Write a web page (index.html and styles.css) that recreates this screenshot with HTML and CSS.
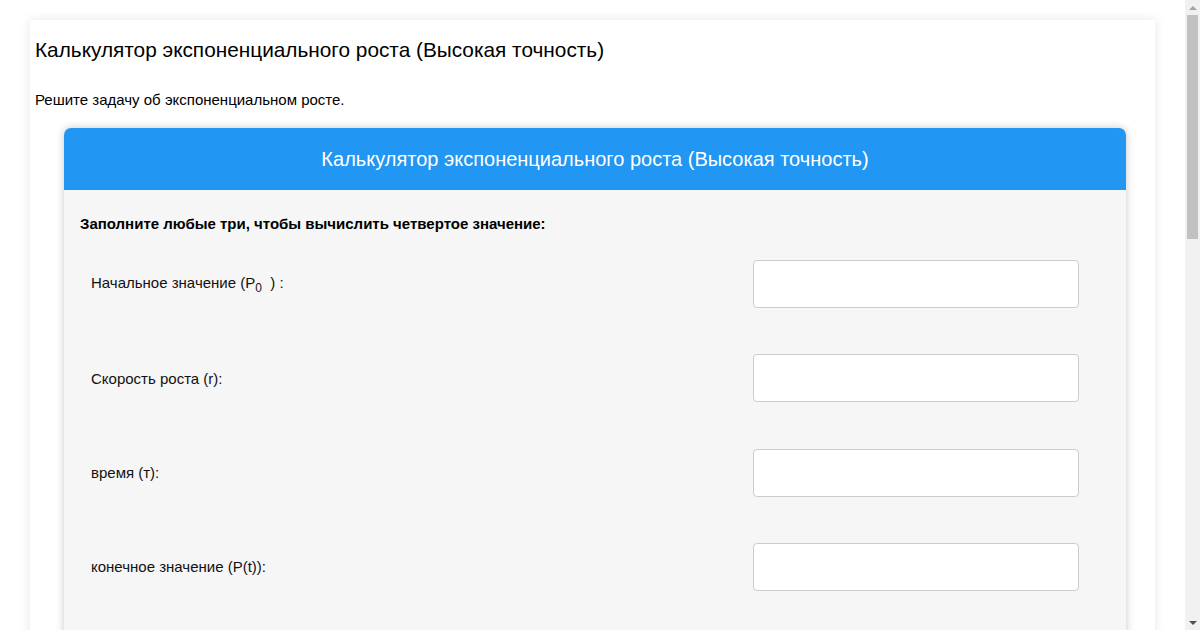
FILE: index.html
```html
<!DOCTYPE html>
<html lang="ru">
<head>
<meta charset="utf-8">
<title>Калькулятор экспоненциального роста</title>
<link rel="stylesheet" href="styles.css">
</head>
<body>
<div class="page">
  <h1 class="page-title">Калькулятор экспоненциального роста (Высокая точность)</h1>
  <p class="page-lead">Решите задачу об экспоненциальном росте.</p>
  <div class="card">
    <div class="card-head">Калькулятор экспоненциального роста (Высокая точность)</div>
    <div class="card-body">
      <p class="hint">Заполните любые три, чтобы вычислить четвертое значение:</p>
      <div class="row">
        <label class="row-label">Начальное значение (P<sub>0</sub>&nbsp; ) :</label>
        <input class="row-input" type="text">
      </div>
      <div class="row">
        <label class="row-label">Скорость роста (r):</label>
        <input class="row-input" type="text">
      </div>
      <div class="row">
        <label class="row-label">время (т):</label>
        <input class="row-input" type="text">
      </div>
      <div class="row">
        <label class="row-label">конечное значение (P(t)):</label>
        <input class="row-input" type="text">
      </div>
      <div class="result"></div>
    </div>
  </div>
</div>
<div class="scrollbar" aria-hidden="true">
  <div class="sb-arrow sb-up"></div>
  <div class="sb-track"><div class="sb-thumb"></div></div>
  <div class="sb-arrow sb-down"></div>
</div>
</body>
</html>
```
FILE: styles.css
```css
html, body {
  margin: 0;
  padding: 0;
  background: #ffffff;
}
body {
  font-family: "Liberation Sans", Arial, sans-serif;
  color: #000;
  margin-right: 15px;
  padding-top: 20px;
  padding-bottom: 40px;
}
.page {
  width: 1125px;
  margin: 0 auto;
  padding: 18px 5px 60px;
  box-sizing: border-box;
  background: #fff;
  box-shadow: 0 0 10px rgba(0, 0, 0, 0.1);
}
.page-title {
  margin: 0;
  font-size: 20.8px;
  line-height: 24px;
  font-weight: normal;
}
.page-lead {
  margin: 29px 0 0;
  font-size: 15px;
  line-height: 18px;
}
.card {
  margin: 19px 24px 0 29px;
  border-radius: 7px;
  overflow: hidden;
  background: #f6f6f6;
  box-shadow: 0 0 8px rgba(0, 0, 0, 0.22);
}
.card-head {
  height: 62px;
  background: #2196f3;
  color: #fff;
  font-size: 20px;
  display: flex;
  align-items: center;
  justify-content: center;
}
.card-body {
  padding: 25px 47px 40px 16px;
}
.hint {
  margin: 0 0 27px;
  font-size: 15px;
  line-height: 18px;
  font-weight: bold;
}
.row {
  display: flex;
  align-items: center;
  justify-content: space-between;
  height: 48px;
  margin-bottom: 46.3px;
  padding-left: 11px;
}
.row-label {
  font-size: 15px;
  color: #111;
}
.row-label sub {
  font-size: 12px;
}
.row-input {
  width: 326px;
  height: 48px;
  box-sizing: border-box;
  border: 1px solid #ccc;
  border-radius: 4px;
  background: #fff;
  font-size: 15px;
  padding: 0 10px;
}
.result {
  height: 900px;
}
.scrollbar {
  position: fixed;
  top: 0;
  right: 0;
  width: 15px;
  height: 100vh;
  background: #f1f1f1;
  display: flex;
  flex-direction: column;
}
.sb-arrow {
  height: 15px;
  flex: none;
  display: flex;
  align-items: center;
  justify-content: center;
}
.sb-up::before,
.sb-down::before {
  content: "";
  width: 0;
  height: 0;
  border-left: 4px solid transparent;
  border-right: 4px solid transparent;
}
.sb-up::before {
  border-bottom: 4px solid #a3a3a3;
}
.sb-down::before {
  border-top: 4px solid #505050;
}
.sb-track {
  flex: 1;
  padding: 0 2px;
}
.sb-thumb {
  height: 224px;
  background: #c1c1c1;
}
```
